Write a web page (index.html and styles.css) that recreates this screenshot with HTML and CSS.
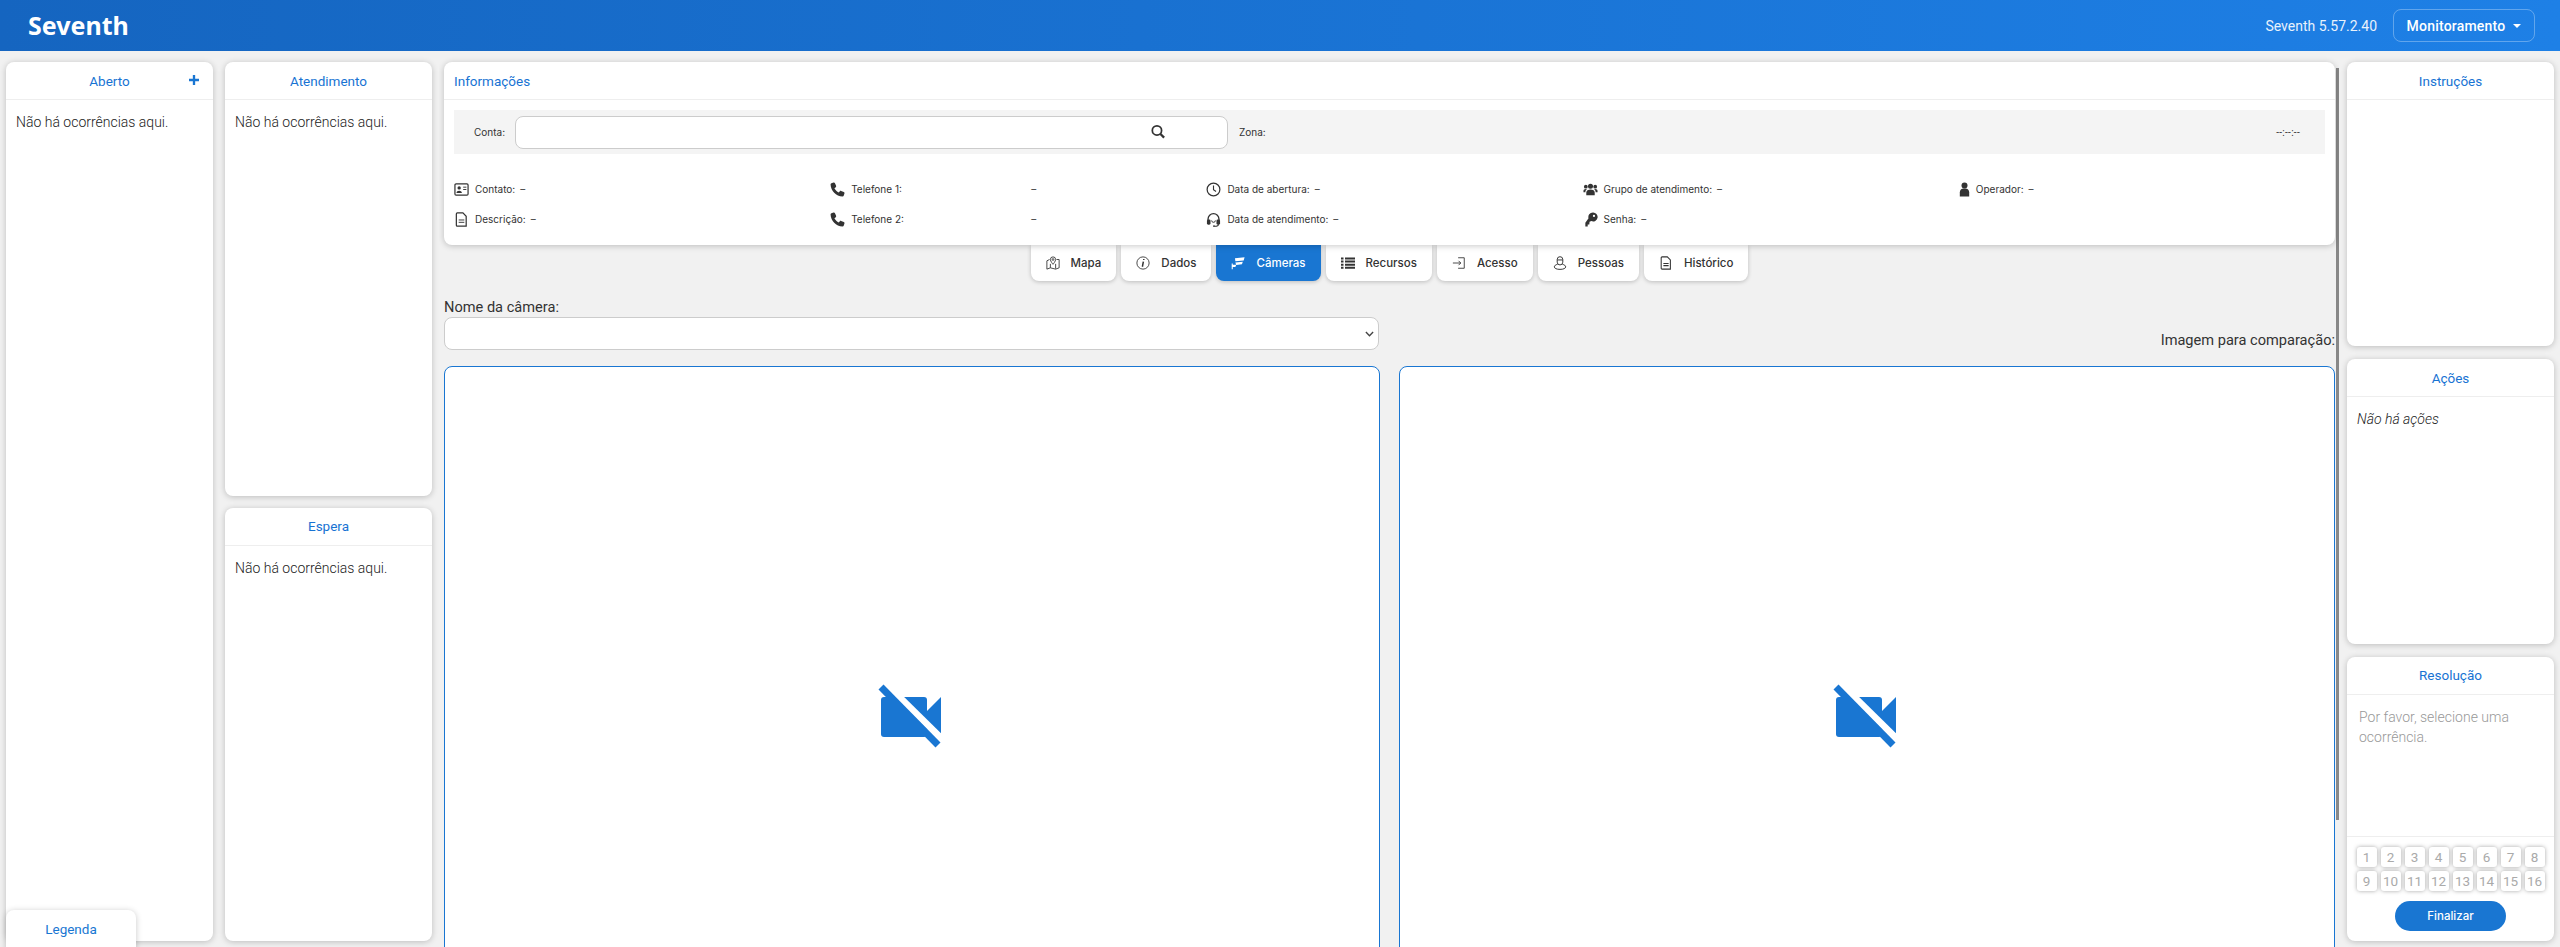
FILE: index.html
```html
<!DOCTYPE html>
<html lang="pt-BR">
<head>
<meta charset="utf-8">
<title>Seventh</title>
<link rel="stylesheet" href="styles.css">
</head>
<body>
<header class="topbar">
  <div class="brand">Seventh</div>
  <div class="top-right">
    <span class="version">Seventh 5.57.2.40</span>
    <button class="mode-btn">Monitoramento<span class="caret"></span></button>
  </div>
</header>
<main class="layout">
  <section class="col col-a">
    <div class="card grow">
      <div class="card-head">Aberto
        <svg class="plus" viewBox="0 0 12 12"><path d="M4.600 0h2.800v4.600H12v2.800H7.400V12H4.600V7.400H0V4.600h4.600z"/></svg>
      </div>
      <p class="empty">Não há ocorrências aqui.</p>
    </div>
  </section>
  <section class="col col-b">
    <div class="card grow">
      <div class="card-head">Atendimento</div>
      <p class="empty">Não há ocorrências aqui.</p>
    </div>
    <div class="card grow">
      <div class="card-head">Espera</div>
      <p class="empty">Não há ocorrências aqui.</p>
    </div>
  </section>
  <section class="center">
    <div class="center-inner">
      <div class="card info">
        <div class="card-head head-left">Informações</div>
        <div class="account-band">
          <label class="band-label band-conta">Conta:</label>
          <div class="search-box">
            <input class="search-input" type="text">
            <svg class="search-ic" viewBox="0 0 16 16" fill="none" stroke="currentColor"><circle cx="6.800" cy="6.800" r="5.300" stroke-width="2"/><path d="M10.800 10.800L15 15" stroke-width="2.600"/></svg>
          </div>
          <label class="band-label band-zona">Zona:</label>
          <span class="band-time">--:--:--</span>
        </div>
        <div class="facts">
          <div class="fact"><svg class="ic" viewBox="0 0 16 16"><rect x="1" y="2" width="14" height="12" rx="1.200" fill="none" stroke="currentColor" stroke-width="1.300"/><circle cx="5.500" cy="6.300" r="1.800"/><path d="M2.600 11.600c0-3.200 5.800-3.200 5.800 0z"/><path d="M9.800 5.500h3.400M9.800 8h3.400" stroke="currentColor"/></svg><span>Contato:</span><span class="dash">–</span></div>
          <div class="fact"><svg class="ic" viewBox="0 0 16 16"><path d="M3.800 .6L1.500 1.300C.9 1.500.6 2 .6 2.600.9 9.500 6.400 15 13.400 15.400c.6 0 1.100-.3 1.300-.9l.7-2.300c.2-.6-.1-1.200-.7-1.500l-2.800-1.200c-.5-.2-1.100-.1-1.400.3L9.300 11.300C7.400 10.200 5.800 8.600 4.700 6.700l1.500-1.200c.4-.3.5-.9.3-1.400L5.300 1.300C5.100.7 4.400.4 3.800.6z"/></svg><span class="fixed-label">Telefone 1:</span><span class="dash">–</span></div>
          <div class="fact"><svg class="ic" viewBox="0 0 16 16"><circle cx="8" cy="8" r="6.800" fill="none" stroke="currentColor" stroke-width="1.300"/><path d="M8 3.800v4.500l2.700 1.900" fill="none" stroke="currentColor" stroke-width="1.200"/></svg><span>Data de abertura:</span><span class="dash">–</span></div>
          <div class="fact"><svg class="ic" viewBox="0 0 16 16"><circle cx="8" cy="4.500" r="2.700"/><circle cx="3" cy="5" r="2"/><circle cx="13" cy="5" r="2"/><path d="M3.500 14v-2.500C3.500 9 5.500 8 8 8s4.500 1 4.500 3.500V14z"/><path d="M0.500 11V9.500C.5 8.300 1.500 7.500 3 7.500c.5 0 .8.100 1 .2C3 8.500 2.500 9.700 2.500 11zM15.500 11V9.500c0-1.200-1-2-2.500-2-.5 0-.8.100-1 .2 1 .8 1.500 2 1.500 3.300z"/></svg><span>Grupo de atendimento:</span><span class="dash">–</span></div>
          <div class="fact"><svg class="ic ic-narrow" viewBox="2.500 0 11 16"><circle cx="8" cy="3.700" r="3.200"/><path d="M3 15.500V11c0-2.500 1.800-4 4-4h2c2.200 0 4 1.500 4 4v4.500z"/></svg><span>Operador:</span><span class="dash">–</span></div>
          <div class="fact"><svg class="ic" viewBox="0 0 16 16"><path d="M3.500 1h6L13 4.500V15H3.500a1 1 0 0 1-1-1V2a1 1 0 0 1 1-1z" fill="none" stroke="currentColor" stroke-width="1.300"/><path d="M5 8.500h6M5 11h6" stroke="currentColor"/></svg><span>Descrição:</span><span class="dash">–</span></div>
          <div class="fact"><svg class="ic" viewBox="0 0 16 16"><path d="M3.800 .6L1.500 1.300C.9 1.500.6 2 .6 2.600.9 9.500 6.400 15 13.400 15.400c.6 0 1.100-.3 1.300-.9l.7-2.300c.2-.6-.1-1.200-.7-1.500l-2.800-1.200c-.5-.2-1.100-.1-1.400.3L9.300 11.300C7.400 10.200 5.800 8.600 4.700 6.700l1.500-1.200c.4-.3.5-.9.3-1.400L5.300 1.300C5.100.7 4.400.4 3.800.6z"/></svg><span class="fixed-label">Telefone 2:</span><span class="dash">–</span></div>
          <div class="fact"><svg class="ic" viewBox="0 0 16 16"><path d="M2.200 8.500V7.500a5.800 5.800 0 0 1 11.600 0v1" fill="none" stroke="currentColor" stroke-width="1.400"/><rect x="1" y="8" width="3.800" height="5.500" rx="1.400"/><rect x="11.200" y="8" width="3.800" height="5.500" rx="1.400"/><path d="M13.300 13c0 1.500-1.800 2.200-4.300 2.200" fill="none" stroke="currentColor" stroke-width="1.200"/><circle cx="8.500" cy="15" r="1"/><path d="M6 9a2 2 0 0 0 4 0" fill="none" stroke="currentColor"/></svg><span>Data de atendimento:</span><span class="dash">–</span></div>
          <div class="fact"><svg class="ic" viewBox="0 0 16 16"><path d="M10.500 0.500a4.800 4.800 0 0 0-4.600 6.200L2.500 11.500V15.500H5V13.200h1.700L7 10.300l1.900-.6A4.800 4.800 0 1 0 10.500.5zm1.200 4.900a1.200 1.200 0 1 1 0-2.400 1.200 1.200 0 0 1 0 2.400z"/></svg><span>Senha:</span><span class="dash">–</span></div>
        </div>
      </div>
      <nav class="tabs">
        <a class="tab"><svg class="tab-ic" viewBox="0 0 16 16" fill="none" stroke="currentColor"><path d="M4 4L1 5.500V15l4-1.500 6 1.500 4-1.500V4l-3 0M5 9v4.500M11 9v5.500"/><path d="M8 1a3 3 0 0 0-3 3c0 2 3 5.500 3 5.500S11 6 11 4a3 3 0 0 0-3-3z"/><circle cx="8" cy="4" r="1"/></svg>Mapa</a>
        <a class="tab"><svg class="tab-ic" viewBox="0 0 16 16" fill="none" stroke="currentColor"><circle cx="8" cy="8" r="7"/><path d="M8.900 3.300v1.400M8.400 6.500L7.300 12.300" stroke-width="1.700"/></svg>Dados</a>
        <a class="tab tab-on"><svg class="tab-ic" viewBox="0 0 16 16" fill="currentColor"><path d="M4.500 2.500L15.500 1.500 14.500 5 5 6z"/><path d="M5 7.500l8.500-1-1 3-6.500.8zM.8 8.500v6.500h1.200v-2.500h3l1-2.500H2v-1.500z"/></svg>Câmeras</a>
        <a class="tab"><svg class="tab-ic" viewBox="0 0 14 14" fill="currentColor"><path d="M0 1.500h2.500v2H0zM4 1.500h10v2H4zM0 4.600h2.500v2H0zM4 4.600h10v2H4zM0 7.700h2.500v2H0zM4 7.700h10v2H4zM0 10.800h2.500v2H0zM4 10.800h10v2H4z"/></svg>Recursos</a>
        <a class="tab"><svg class="tab-ic" viewBox="0 0 16 16" fill="none" stroke="currentColor"><path d="M1 8h9M7.500 5.500L10 8l-2.500 2.500M7 2h7v12H7" stroke-width="1"/></svg>Acesso</a>
        <a class="tab"><svg class="tab-ic" viewBox="0 0 16 16" fill="none" stroke="currentColor" stroke-width="1.100"><path d="M4.800 4a3.200 3.200 0 0 1 6.400 0v3a3.200 3.200 0 0 1-6.400 0zM4.800 4.500h6.400"/><path d="M5.200 9.500C3 10 1.500 11 1.500 12.500S4 15.300 8 15.300s6.500-1.300 6.500-2.800S13 10 10.800 9.500"/></svg>Pessoas</a>
        <a class="tab"><svg class="tab-ic" viewBox="0 0 16 16" fill="none" stroke="currentColor" stroke-width="1.200"><path d="M3.500 1h6L13 4.500V15H3.500a1 1 0 0 1-1-1V2a1 1 0 0 1 1-1z"/><path d="M5 8.500h6M5 11h6"/></svg>Histórico</a>
      </nav>
      <div class="cam-controls">
        <div class="cam-field">
          <label class="cam-label">Nome da câmera:</label>
          <div class="select-wrap">
            <select class="cam-select"><option></option></select>
            <svg class="chevron" viewBox="0 0 10 6" fill="none" stroke="currentColor"><path d="M1 .7l4 4.300 4-4.300" stroke-width="1.500"/></svg>
          </div>
        </div>
        <div class="cam-compare">Imagem para comparação:</div>
      </div>
      <div class="cams">
        <div class="cam-box"><svg class="cam-off" viewBox="0 0 64 64"><rect x="3" y="13" width="46" height="40" rx="3"/><path d="M49 27l14-14v37L49 37z"/><path d="M11 3l57 56" stroke="#fff" stroke-width="7"/><path d="M3 3l57 58" stroke="#1976d2" stroke-width="7"/></svg></div>
        <div class="cam-box"><svg class="cam-off" viewBox="0 0 64 64"><rect x="3" y="13" width="46" height="40" rx="3"/><path d="M49 27l14-14v37L49 37z"/><path d="M11 3l57 56" stroke="#fff" stroke-width="7"/><path d="M3 3l57 58" stroke="#1976d2" stroke-width="7"/></svg></div>
      </div>
    </div>
  </section>
  <section class="col col-r">
    <div class="card grow">
      <div class="card-head">Instruções</div>
    </div>
    <div class="card grow">
      <div class="card-head">Ações</div>
      <p class="empty actions-empty">Não há ações</p>
    </div>
    <div class="card grow resolution">
      <div class="card-head">Resolução</div>
      <p class="res-text">Por favor, selecione uma ocorrência.</p>
      <div class="res-foot">
        <div class="num-grid">
          <span class="num">1</span><span class="num">2</span><span class="num">3</span><span class="num">4</span><span class="num">5</span><span class="num">6</span><span class="num">7</span><span class="num">8</span>
          <span class="num">9</span><span class="num">10</span><span class="num">11</span><span class="num">12</span><span class="num">13</span><span class="num">14</span><span class="num">15</span><span class="num">16</span>
        </div>
        <button class="finish">Finalizar</button>
      </div>
    </div>
  </section>
</main>
<div class="scroll-thumb"></div>
<div class="legend">Legenda</div>
</body>
</html>
```
FILE: styles.css
```css
* { box-sizing: border-box; }
html, body { height: 100%; }
body {
  margin: 0;
  background: #f1f1f1;
  color: #333;
  font-family: Roboto, "Liberation Sans", sans-serif;
  font-size: 14px;
  overflow: hidden;
  display: flex;
  flex-direction: column;
  position: relative;
}
.topbar {
  flex: 0 0 51px;
  display: flex;
  align-items: center;
  justify-content: space-between;
  padding: 0 25px 0 28px;
  background: linear-gradient(90deg, #1565c0 0%, #1e80e6 100%);
  color: #fff;
}
.brand {
  font-family: "Noto Sans", sans-serif;
  font-weight: 700;
  font-size: 25px;
  line-height: 1;
}
.top-right { display: flex; align-items: center; gap: 16px; }
.version { font-weight: 400; font-size: 14px; opacity: .9; }
.mode-btn {
  width: 142px;
  height: 33px;
  display: flex;
  align-items: center;
  justify-content: center;
  gap: 8px;
  background: transparent;
  color: #fff;
  font: 500 14px Roboto, sans-serif;
  letter-spacing: .2px;
  border: 1px solid rgba(255,255,255,.3);
  border-radius: 8px;
}
.caret {
  width: 0;
  height: 0;
  border-left: 4px solid transparent;
  border-right: 4px solid transparent;
  border-top: 4px solid #fff;
}
.layout {
  flex: 1;
  min-height: 0;
  display: flex;
  gap: 12px;
  padding: 0 6px;
}
.col {
  flex: 0 0 207px;
  display: flex;
  flex-direction: column;
  gap: 12px;
  padding: 11px 0 6px;
  min-height: 0;
}
.col-r { gap: 13px; }
.card {
  background: #fff;
  border-radius: 8px;
  box-shadow: 0 1px 6px rgba(0,0,0,.22);
  display: flex;
  flex-direction: column;
  min-height: 0;
}
.grow { flex: 1 1 0; }
.card-head {
  position: relative;
  flex: 0 0 38px;
  display: flex;
  align-items: center;
  justify-content: center;
  border-bottom: 1px solid #eee;
  color: #1873d3;
  font-size: 13.5px;
}
.head-left { justify-content: flex-start; padding-left: 10px; }
.plus {
  position: absolute;
  right: 14px;
  top: 13px;
  width: 10px;
  height: 10px;
  fill: #1976d2;
}
.empty {
  margin: 0;
  padding: 12px 10px;
  font-weight: 300;
  font-size: 14px;
  line-height: 20px;
  color: #222;
}
.actions-empty { font-style: italic; }
.center {
  flex: 1;
  min-width: 0;
  margin: 0 -4px 0 -5px;
  overflow: hidden;
  padding: 11px 4px 0 5px;
}
.scroll-thumb {
  position: absolute;
  left: 2336px;
  top: 68px;
  width: 3px;
  height: 752px;
  background: #888;
}
.info {
  position: relative;
  z-index: 2;
  height: 183px;
}
.account-band {
  display: flex;
  align-items: center;
  height: 44px;
  margin: 10px 10px 0;
  background: #f4f4f4;
  font: 10px Inter, sans-serif;
  color: #333;
  position: relative;
}
.band-label { white-space: nowrap; }
.band-conta { margin-left: 20px; width: 41px; }
.search-box { position: relative; width: 713px; height: 33px; }
.search-input {
  width: 100%;
  height: 100%;
  background: #fff;
  border: 1px solid #ccc;
  border-radius: 8px;
  outline: none;
  padding: 0 10px;
}
.search-ic {
  position: absolute;
  right: 63px;
  top: 8px;
  width: 14px;
  height: 15px;
  color: #333;
}
.band-zona { margin-left: 11px; }
.band-time {
  margin-left: auto;
  margin-right: 25px;
  font-family: Roboto, sans-serif;
  letter-spacing: .3px;
}
.facts {
  display: grid;
  grid-template-columns: repeat(5, 1fr);
  grid-auto-rows: 30px;
  padding: 20px 0 0 10px;
  font: 10px Inter, sans-serif;
}
.fact { display: flex; align-items: center; white-space: nowrap; color: #333; }
.ic {
  flex: none;
  width: 15px;
  height: 15px;
  margin-right: 6px;
  fill: currentColor;
  color: #333;
}
.ic-narrow { width: 11px; }
.dash { margin-left: 5px; }
.fixed-label { width: 180px; margin-right: -5px; }
.tabs {
  display: flex;
  justify-content: center;
  gap: 5px;
  height: 36px;
}
.tab {
  display: flex;
  align-items: center;
  gap: 11px;
  padding: 0 15px;
  background: #fff;
  border-radius: 0 0 8px 8px;
  box-shadow: 0 1px 4px rgba(0,0,0,.22);
  font: 500 11.5px Inter, sans-serif;
  color: #333;
}
.tab-on { background: #1976d2; color: #fff; }
.tab-ic { flex: none; width: 14px; height: 14px; }
.cam-controls {
  display: grid;
  grid-template-columns: 935px 1fr;
  gap: 20px;
  align-items: end;
  margin-top: 17px;
}
.cam-label { display: block; line-height: 19px; font-size: 14.6px; }
.select-wrap { position: relative; }
.cam-select {
  display: block;
  width: 100%;
  height: 33px;
  background: #fff;
  border: 1px solid #ccc;
  border-radius: 8px;
  appearance: none;
}
.chevron {
  position: absolute;
  right: 5px;
  top: 14px;
  width: 9px;
  height: 6px;
  color: #444;
  pointer-events: none;
}
.cam-compare { text-align: right; font-size: 14.6px; line-height: 19px; }
.cams {
  display: grid;
  grid-template-columns: 936px 1fr;
  gap: 19px;
  margin-top: 16px;
}
.cam-box {
  height: 700px;
  background: #fff;
  border: 1px solid #1976d2;
  border-radius: 8px;
  display: flex;
  align-items: center;
  justify-content: center;
}
.cam-off { width: 64px; height: 64px; fill: #1976d2; margin-right: 4px; }
.res-text {
  margin: 0;
  flex: 1;
  padding: 12px 12px;
  color: #999;
  font-weight: 300;
  line-height: 20px;
}
.res-foot {
  flex: 0 0 105px;
  border-top: 1px solid #eee;
  padding-top: 10px;
  display: flex;
  flex-direction: column;
  align-items: center;
}
.num-grid {
  display: grid;
  grid-template-columns: repeat(8, 20px);
  grid-auto-rows: 20px;
  gap: 4px;
}
.num {
  display: flex;
  align-items: center;
  justify-content: center;
  background: #fff;
  border-radius: 3px;
  box-shadow: 0 0 4px rgba(0,0,0,.35);
  color: #aaa;
  font-size: 13.5px;
}
.finish {
  width: 111px;
  height: 30px;
  margin-top: 10px;
  background: #1976d2;
  border: 0;
  border-radius: 15px;
  color: #fff;
  font: 500 11.5px Inter, sans-serif;
}
.legend {
  position: absolute;
  left: 6px;
  top: 910px;
  width: 130px;
  height: 60px;
  padding-top: 11px;
  background: #fff;
  border-radius: 8px 8px 0 0;
  box-shadow: 0 1px 6px rgba(0,0,0,.22);
  color: #1976d2;
  font-size: 13.5px;
  text-align: center;
}
```
